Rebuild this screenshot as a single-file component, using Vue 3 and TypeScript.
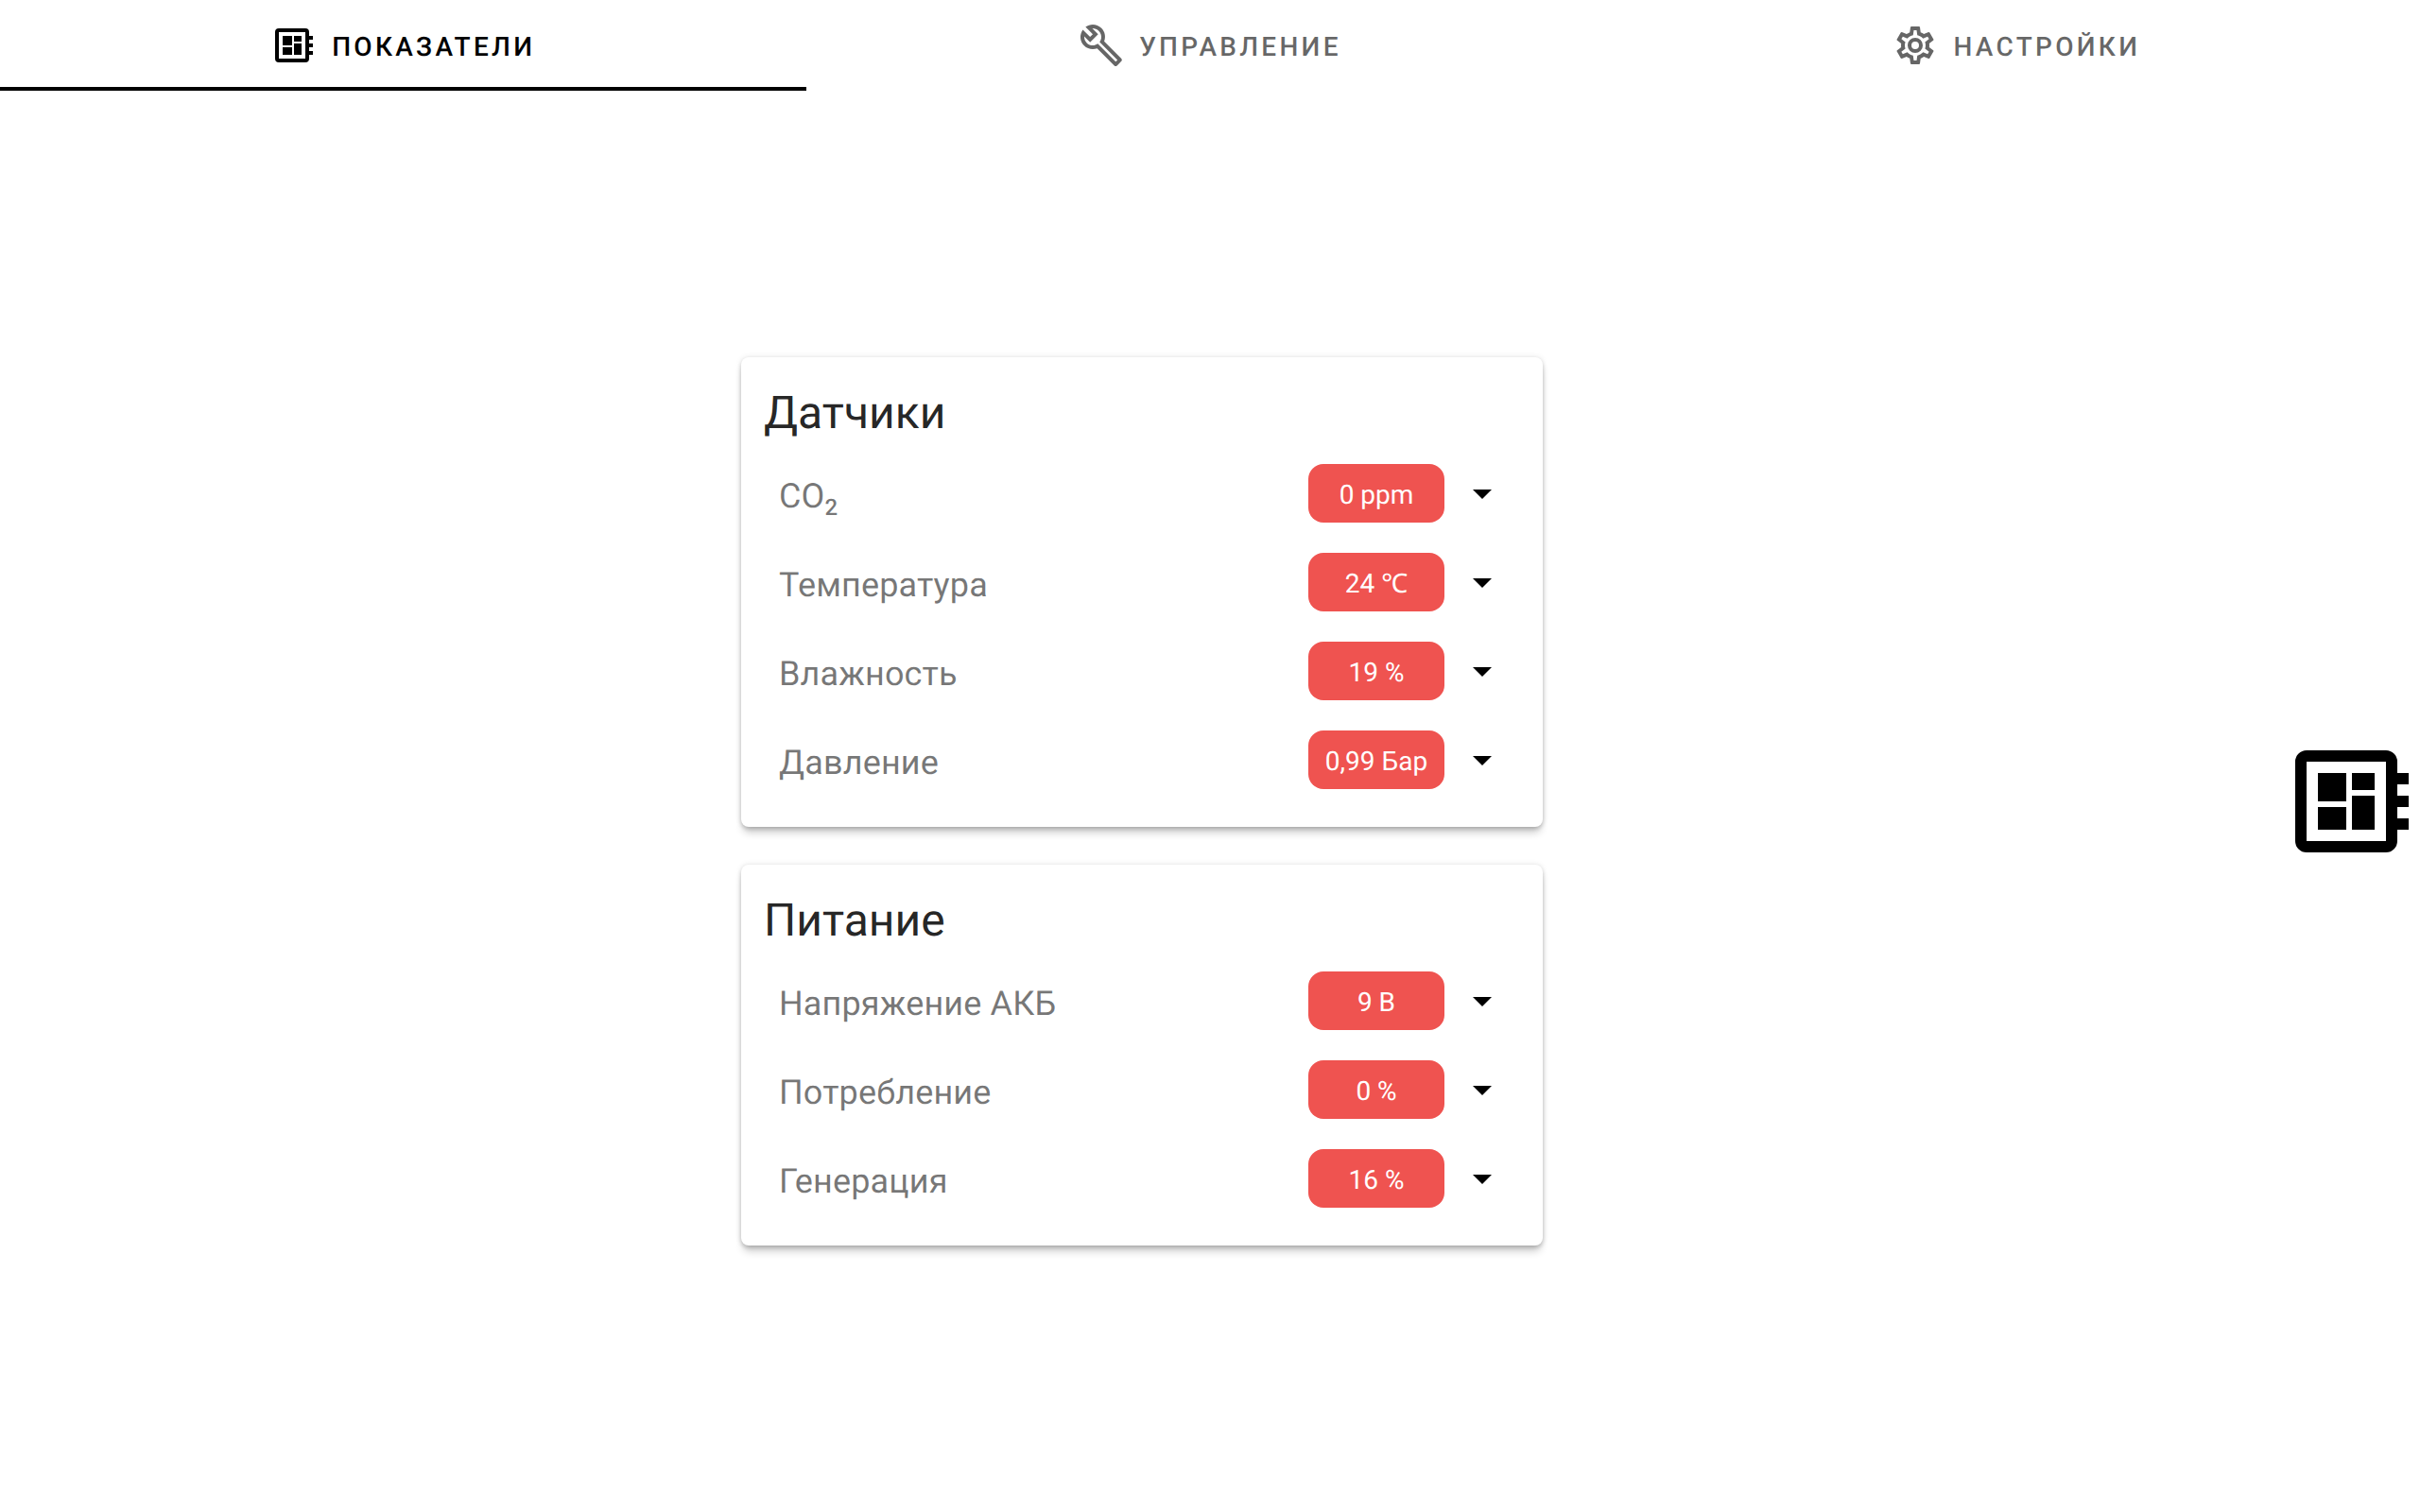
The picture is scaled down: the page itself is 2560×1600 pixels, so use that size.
<script setup lang="ts">
import { ref } from "vue";

const boardIcon =
  "M22,9V7H20V5A2,2 0 0,0 18,3H4A2,2 0 0,0 2,5V19A2,2 0 0,0 4,21H18A2,2 0 0,0 20,19V17H22V15H20V13H22V11H20V9H22M18,19H4V5H18V19M6,13H11V17H6V13M12,7H16V10H12V7M6,7H11V12H6V7M12,11H16V17H12V11Z";
const wrenchIcon =
  "M22.61,19L13.53,9.91C14.46,7.57 14,4.81 12.09,2.91C9.79,0.61 6.21,0.4 3.66,2.26L7.5,6.11L6.08,7.5L2.25,3.69C0.39,6.23 0.6,9.82 2.9,12.11C4.76,13.97 7.47,14.46 9.79,13.59L18.9,22.7C19.29,23.09 19.92,23.09 20.31,22.7L22.61,20.4C23,20 23,19.39 22.61,19M19.61,20.59L10.15,11.13C9.54,11.58 8.86,11.85 8.15,11.95C6.79,12.15 5.36,11.74 4.32,10.7C3.37,9.76 2.93,8.5 3,7.26L6.09,10.35L10.33,6.11L7.24,3C8.5,2.95 9.73,3.39 10.68,4.33C11.76,5.41 12.17,6.9 11.97,8.29C11.87,9 11.57,9.67 11.12,10.27L20.56,19.7L19.61,20.59Z";
const cogIcon =
  "M12,8A4,4 0 0,1 16,12A4,4 0 0,1 12,16A4,4 0 0,1 8,12A4,4 0 0,1 12,8M12,10A2,2 0 0,0 10,12A2,2 0 0,0 12,14A2,2 0 0,0 14,12A2,2 0 0,0 12,10M10,22C9.75,22 9.54,21.82 9.5,21.58L9.13,18.93C8.5,18.68 7.96,18.34 7.44,17.94L4.95,18.95C4.73,19.03 4.46,18.95 4.34,18.73L2.34,15.27C2.21,15.05 2.27,14.78 2.46,14.63L4.57,12.97L4.5,12L4.57,11L2.46,9.37C2.27,9.22 2.21,8.95 2.34,8.73L4.34,5.27C4.46,5.05 4.73,4.96 4.95,5.05L7.44,6.05C7.96,5.66 8.5,5.32 9.13,5.07L9.5,2.42C9.54,2.18 9.75,2 10,2H14C14.25,2 14.46,2.18 14.5,2.42L14.87,5.07C15.5,5.32 16.04,5.66 16.56,6.05L19.05,5.05C19.27,4.96 19.54,5.05 19.66,5.27L21.66,8.73C21.79,8.95 21.73,9.22 21.54,9.37L19.43,11L19.5,12L19.43,13L21.54,14.63C21.73,14.78 21.79,15.05 21.66,15.27L19.66,18.73C19.54,18.95 19.27,19.04 19.05,18.95L16.56,17.95C16.04,18.34 15.5,18.68 14.87,18.93L14.5,21.58C14.46,21.82 14.25,22 14,22H10M11.25,4L10.88,6.61C9.68,6.86 8.62,7.5 7.85,8.39L5.44,7.35L4.69,8.65L6.8,10.2C6.4,11.37 6.4,12.64 6.8,13.8L4.68,15.36L5.43,16.66L7.86,15.62C8.63,16.5 9.68,17.14 10.87,17.38L11.24,20H12.76L13.13,17.39C14.32,17.14 15.37,16.5 16.14,15.62L18.57,16.66L19.32,15.36L17.2,13.81C17.6,12.64 17.6,11.37 17.2,10.2L19.31,8.65L18.56,7.35L16.15,8.39C15.38,7.5 14.32,6.86 13.12,6.62L12.75,4H11.25Z";

const tabs = [
  { title: "Показатели", icon: boardIcon },
  { title: "Управление", icon: wrenchIcon },
  { title: "Настройки", icon: cogIcon },
];
const activeTab = ref(0);

type Row = { label: string; sub?: string; value: string };
const cards: { title: string; rows: Row[] }[] = [
  {
    title: "Датчики",
    rows: [
      { label: "CO", sub: "2", value: "0 ppm" },
      { label: "Температура", value: "24 ℃" },
      { label: "Влажность", value: "19 %" },
      { label: "Давление", value: "0,99 Бар" },
    ],
  },
  {
    title: "Питание",
    rows: [
      { label: "Напряжение АКБ", value: "9 В" },
      { label: "Потребление", value: "0 %" },
      { label: "Генерация", value: "16 %" },
    ],
  },
];
</script>

<template>
  <div class="app">
    <nav class="tabs">
      <button
        v-for="(tab, i) in tabs"
        :key="tab.title"
        class="tab"
        :class="{ active: i === activeTab }"
        @click="activeTab = i"
      >
        <svg class="tab-icon" viewBox="0 0 24 24"><path :d="tab.icon" /></svg>
        <span class="tab-text">{{ tab.title }}</span>
      </button>
    </nav>
    <main class="main">
      <div class="content">
        <section v-for="card in cards" :key="card.title" class="card">
          <h2 class="card-title">{{ card.title }}</h2>
          <div v-for="row in card.rows" :key="row.label" class="row">
            <span class="label">{{ row.label }}<sub v-if="row.sub">{{ row.sub }}</sub></span>
            <span class="chip">{{ row.value }}</span>
            <svg class="arrow" viewBox="0 0 24 24"><path d="M7,10L12,15L17,10H7Z" /></svg>
          </div>
        </section>
      </div>
      <svg class="side-icon" viewBox="0 0 24 24"><path :d="boardIcon" /></svg>
    </main>
  </div>
</template>

<style>
html,
body {
  margin: 0;
  background: #fff;
}
</style>

<style scoped>
.app {
  font-family: Roboto, "Noto Sans", sans-serif;
  text-rendering: geometricPrecision;
  height: 1600px;
  display: flex;
  flex-direction: column;
}
.tabs {
  display: flex;
  height: 96px;
  flex-shrink: 0;
}
.tab {
  flex: 1;
  display: flex;
  align-items: center;
  justify-content: center;
  gap: 16px;
  padding: 4px 0 0;
  border: 0;
  border-bottom: 4px solid transparent;
  background: none;
  font-family: inherit;
  text-rendering: inherit;
  font-size: 28px;
  font-weight: 500;
  letter-spacing: 3.3px;
  text-transform: uppercase;
  color: rgba(0, 0, 0, 0.6);
  fill: rgba(0, 0, 0, 0.6);
}
.tab.active {
  color: #000;
  fill: #000;
  border-bottom-color: #000;
}
.tab-icon {
  width: 48px;
  height: 48px;
}
.tab-text {
  padding-top: 2px;
}
.main {
  flex: 1;
  display: flex;
  align-items: center;
}
.content {
  flex: 1;
  display: flex;
  flex-direction: column;
  align-items: center;
  gap: 40px;
}
.card {
  width: 848px;
  box-sizing: border-box;
  padding: 0 40px 40px;
  border-radius: 8px;
  background: #fff;
  box-shadow: 0 8px 8px -2px rgba(0, 0, 0, 0.2), 0 2px 4px 0 rgba(0, 0, 0, 0.14),
    0 0 6px 0 rgba(0, 0, 0, 0.1);
}
.card-title {
  margin: 0 0 0 -16px;
  height: 113px;
  padding-top: 27px;
  box-sizing: border-box;
  font-size: 48px;
  font-weight: 400;
  line-height: 64px;
  color: rgba(0, 0, 0, 0.87);
}
.row {
  display: flex;
  align-items: center;
  height: 62px;
  margin-bottom: 32px;
}
.row:last-child {
  margin-bottom: 0;
}
.label {
  flex: 1;
  font-size: 36px;
  line-height: 48px;
  letter-spacing: 0.15px;
  padding-top: 6px;
  color: rgba(0, 0, 0, 0.54);
}
.label sub {
  font-size: 24px;
  font-weight: 500;
  line-height: 0;
}
.chip {
  width: 144px;
  height: 62px;
  box-sizing: border-box;
  padding-top: 2px;
  display: flex;
  align-items: center;
  justify-content: center;
  border-radius: 16px;
  background: #ef5350;
  color: #fff;
  font-size: 28px;
}
.arrow {
  width: 48px;
  height: 48px;
  margin: 0 0 0 16px;
  fill: #000;
}
.side-icon {
  width: 144px;
  height: 144px;
  flex-shrink: 0;
  fill: #000;
}
</style>
